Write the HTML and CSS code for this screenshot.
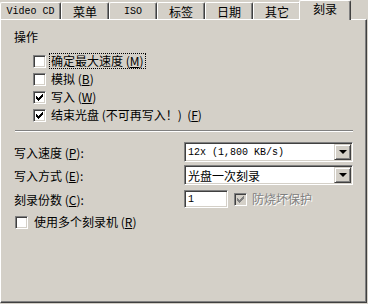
FILE: index.html
```html
<!DOCTYPE html>
<html lang="zh-CN">
<head>
    <meta charset="UTF-8">
    <title>刻录</title>
    <link rel="stylesheet" href="styles.css">
</head>
<body>
    <div class="window">
        <div class="tabs">
            <div class="tab tab-wide"><span class="mono">Video CD</span></div>
            <div class="tab">菜单</div>
            <div class="tab"><span class="mono">ISO</span></div>
            <div class="tab">标签</div>
            <div class="tab">日期</div>
            <div class="tab">其它</div>
            <div class="tab active">刻录</div>
        </div>
        <div class="panel">
            <div class="group-title">操作</div>
            <div class="options">
                <div class="check">
                    <span class="box"></span>
                    <span class="text focus">确定最大速度 (<u>M</u>)</span>
                </div>
                <div class="check">
                    <span class="box"></span>
                    <span class="text">模拟 (<u>B</u>)</span>
                </div>
                <div class="check">
                    <span class="box checked">
                        <svg width="7" height="7" viewBox="0 0 7 7"><path d="M0 2h1v3h-1zM1 3h1v3h-1zM2 4h1v3h-1zM3 3h1v3h-1zM4 2h1v3h-1zM5 1h1v3h-1zM6 0h1v3h-1z" fill="#000"/></svg>
                    </span>
                    <span class="text">写入 (<u>W</u>)</span>
                </div>
                <div class="check">
                    <span class="box checked">
                        <svg width="7" height="7" viewBox="0 0 7 7"><path d="M0 2h1v3h-1zM1 3h1v3h-1zM2 4h1v3h-1zM3 3h1v3h-1zM4 2h1v3h-1zM5 1h1v3h-1zM6 0h1v3h-1z" fill="#000"/></svg>
                    </span>
                    <span class="text">结束光盘 (不可再写入！)&nbsp; (<u>F</u>)</span>
                </div>
            </div>

            <div class="sep"></div>

            <div class="form">
                <div class="field">
                    <span class="label">写入速度 (<u>P</u>):</span>
                    <div class="combo">
                        <span class="value mono">12x (1,800 KB/s)</span>
                        <span class="drop"><span class="arrow"></span></span>
                    </div>
                </div>
                <div class="field">
                    <span class="label">写入方式 (<u>E</u>):</span>
                    <div class="combo">
                        <span class="value">光盘一次刻录</span>
                        <span class="drop"><span class="arrow"></span></span>
                    </div>
                </div>
                <div class="field">
                    <span class="label">刻录份数 (<u>C</u>):</span>
                    <div class="edit"><span class="mono">1</span></div>
                    <div class="check disabled">
                        <span class="box checked">
                            <svg width="7" height="7" viewBox="0 0 7 7"><path d="M0 2h1v3h-1zM1 3h1v3h-1zM2 4h1v3h-1zM3 3h1v3h-1zM4 2h1v3h-1zM5 1h1v3h-1zM6 0h1v3h-1z" fill="#808080"/></svg>
                        </span>
                        <span class="text">防烧坏保护</span>
                    </div>
                </div>
                <div class="check multi">
                    <span class="box"></span>
                    <span class="text">使用多个刻录机 (<u>R</u>)</span>
                </div>
            </div>
        </div>
    </div>
</body>
</html>
```

FILE: styles.css
```css
body {
    margin: 0;
    background: #d4d0c8;
    color: #000;
    font-family: "Noto Sans CJK SC", sans-serif;
    font-size: 12px;
}
u {
    text-underline-offset: 1px;
}
.mono {
    font-family: "Liberation Mono", "Noto Sans CJK SC", monospace;
    font-size: 10px;
}
.window {
    width: 367px;
}
.tabs {
    display: flex;
    align-items: flex-start;
    height: 19px;
}
.tab {
    box-sizing: border-box;
    width: 48px;
    height: 17px;
    margin-top: 2px;
    border-top: 1px solid #fff;
    border-left: 1px solid #fff;
    border-right: 1px solid #404040;
    border-radius: 2px 2px 0 0;
    box-shadow: inset -1px 0 #808080;
    display: flex;
    align-items: center;
    justify-content: center;
    line-height: 15px;
    white-space: nowrap;
}
.tab-wide {
    width: 61px;
}
.tab.active {
    position: relative;
    z-index: 1;
    width: 52px;
    height: 20px;
    margin: 0 -2px -1px;
    padding-bottom: 4px;
    background: #d4d0c8;
}
.panel {
    box-sizing: border-box;
    height: 284px;
    padding: 8px 13px 0;
    border-top: 1px solid #fff;
    border-left: 1px solid #fff;
    border-right: 1px solid #404040;
    border-bottom: 1px solid #404040;
    box-shadow: inset -1px -1px #808080;
}
.group-title {
    line-height: 18px;
}
.options {
    margin: 6px 0 0 19px;
}
.check {
    display: flex;
    align-items: center;
    height: 18px;
    line-height: 18px;
}
.box {
    box-sizing: border-box;
    width: 13px;
    height: 13px;
    flex: none;
    background: #fff;
    border-top: 1px solid #808080;
    border-left: 1px solid #808080;
    border-right: 1px solid #fff;
    border-bottom: 1px solid #fff;
    box-shadow: inset 1px 1px #404040, inset -1px -1px #d4d0c8;
    display: flex;
    align-items: center;
    justify-content: center;
}
.box svg {
    display: block;
}
.text {
    margin-left: 4px;
    padding: 0 1px;
    line-height: 14px;
    white-space: nowrap;
}
.focus {
    outline: 1px dotted #000;
}
.sep {
    height: 0;
    margin: 6px 0 0 1px;
    border-top: 1px solid #808080;
    border-bottom: 1px solid #fff;
}
.form {
    margin-top: 10px;
}
.field {
    display: flex;
    align-items: center;
    height: 20px;
    margin-bottom: 3px;
}
.field + .field {
    margin-bottom: 4px;
}
.label {
    width: 170px;
    flex: none;
    white-space: nowrap;
}
.combo,
.edit {
    box-sizing: border-box;
    height: 20px;
    background: #fff;
    border-top: 1px solid #808080;
    border-left: 1px solid #808080;
    border-right: 1px solid #fff;
    border-bottom: 1px solid #fff;
    box-shadow: inset 1px 1px #404040, inset -1px -1px #d4d0c8;
    display: flex;
    align-items: center;
}
.combo {
    width: 169px;
    padding: 1px;
}
.combo .value {
    flex: 1;
    padding-left: 2px;
    white-space: nowrap;
}
.drop {
    box-sizing: border-box;
    width: 17px;
    height: 16px;
    background: #d4d0c8;
    border-top: 1px solid #d4d0c8;
    border-left: 1px solid #d4d0c8;
    border-right: 1px solid #404040;
    border-bottom: 1px solid #404040;
    box-shadow: inset 1px 1px #fff, inset -1px -1px #808080;
    display: flex;
    align-items: center;
    justify-content: center;
}
.arrow {
    width: 0;
    height: 0;
    border-left: 4px solid transparent;
    border-right: 4px solid transparent;
    border-top: 4px solid #000;
}
.edit {
    width: 44px;
    height: 18px;
    padding-left: 3px;
}
.disabled {
    margin-left: 6px;
}
.disabled .box {
    background: #d4d0c8;
}
.disabled .text {
    color: #808080;
    text-shadow: 1px 1px #fff;
}
.check.multi {
    margin: 2px 0 0 1px;
}
.multi .text {
    margin-left: 5px;
}
```
